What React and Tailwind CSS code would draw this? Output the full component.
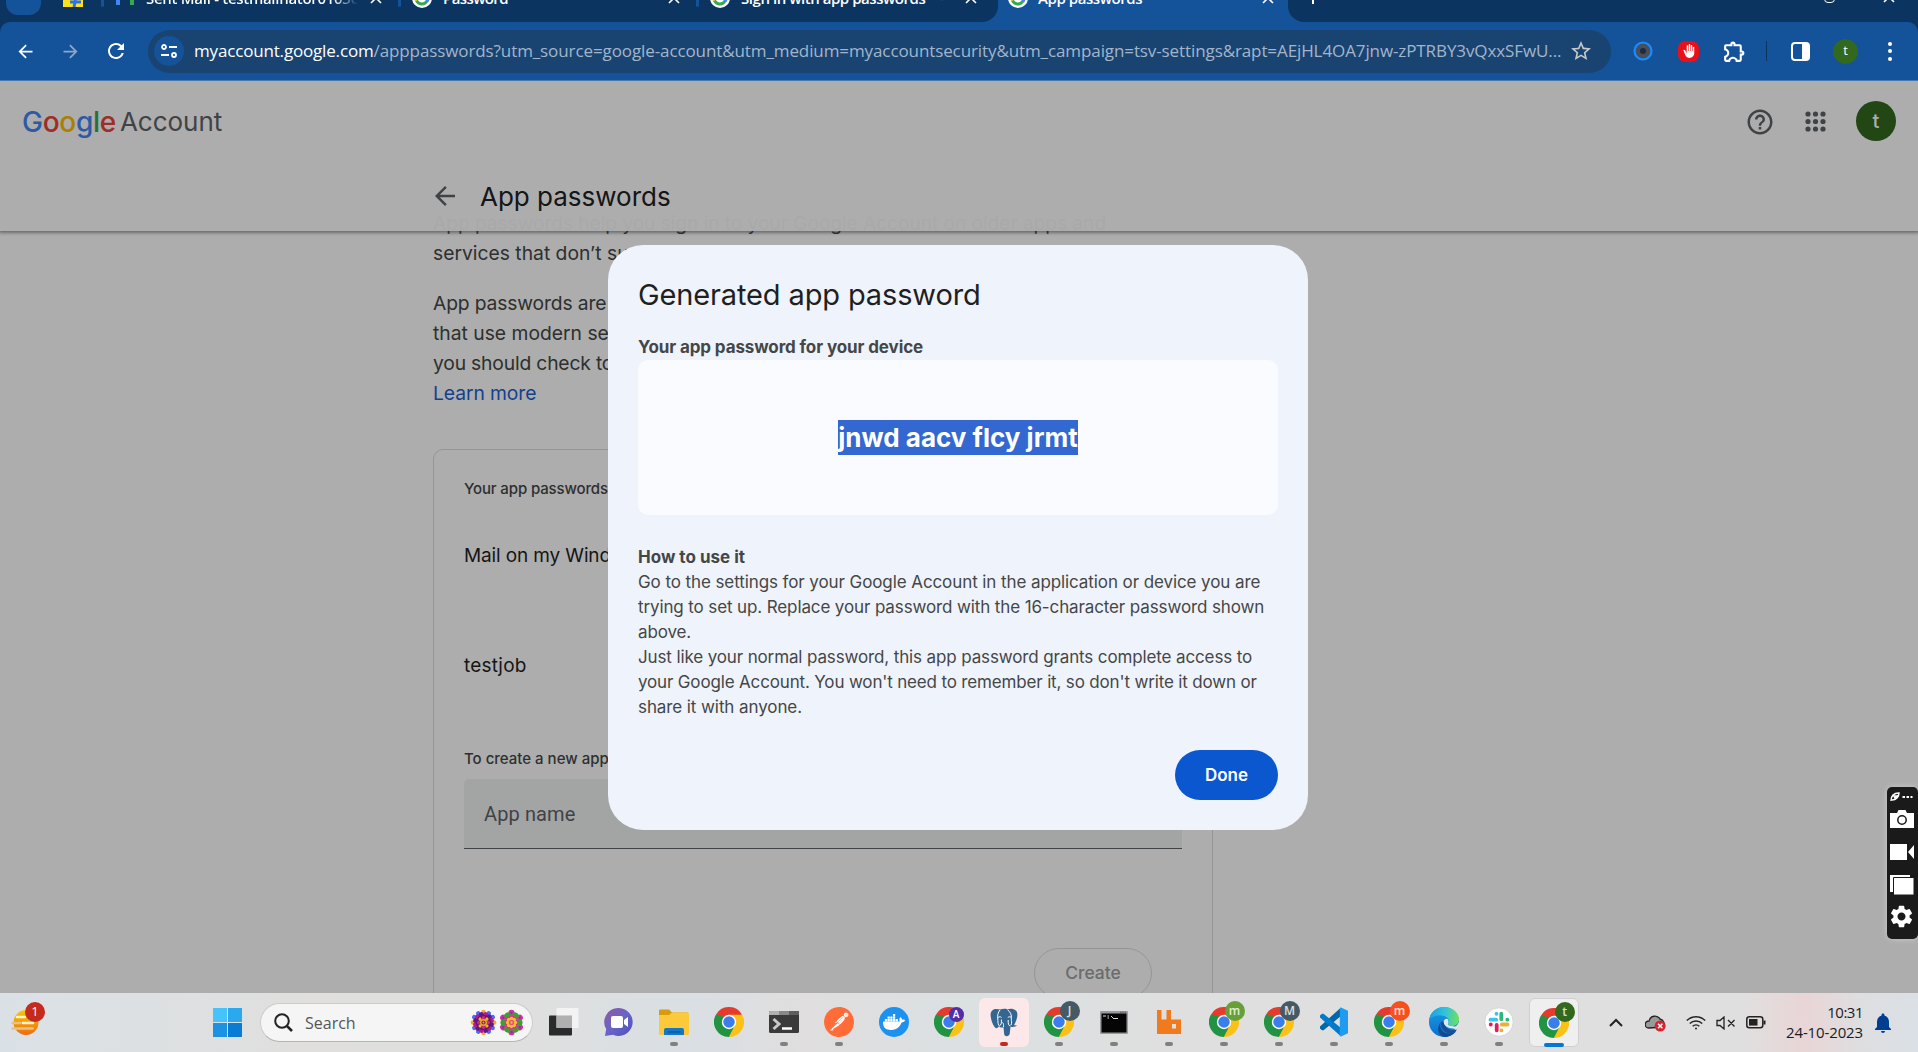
import React from "react";
import { SiDocker, SiPostman } from "react-icons/si";
import { MdHelpOutline, MdArrowBack, MdArrowForward, MdRefresh, MdStarBorder, MdOutlineExtension, MdSettings, MdNotifications, MdBackHand } from "react-icons/md";

const T = ({ c = "", children }) => (
  <span className={"inline-block whitespace-pre " + c}>{children}</span>
);

const GIcon = () => (
  <svg viewBox="0 0 20 20" className="h-5 w-5 shrink-0">
    <circle cx="10" cy="10" r="10" fill="#fff" />
    <path d="M4.4 12.5a6 6 0 0 0 10.6.6" stroke="#34a853" strokeWidth="3" fill="none" />
    <path d="M15 13.5A6 6 0 0 0 16 9.5h-5.5" stroke="#4285f4" strokeWidth="3" fill="none" />
    <path d="M4.4 12.5a6 6 0 0 1 0-5" stroke="#fbbc04" strokeWidth="3" fill="none" />
    <path d="M4.4 7.5a6 6 0 0 1 10-1.5" stroke="#ea4335" strokeWidth="3" fill="none" />
  </svg>
);

const X = () => (
  <svg viewBox="0 0 12 12" className="h-3 w-3 shrink-0"><path d="M1 1l10 10M11 1L1 11" stroke="#fff" strokeWidth="1.6" /></svg>
);

const Tab = ({ icon, label, wrap, pad, track, end, close = "mr-4" }) => (
  <div className={"-mt-[14px] flex h-6 items-center " + wrap}>
    <span className={"flex shrink-0 justify-center " + pad}>{icon}</span>
    <T c={"text-[15px] font-semibold text-white " + track}>{label}</T>
    {end}
    <span className={"ml-auto flex " + close}><X /></span>
  </div>
);

const Chrome = () => (
  <svg viewBox="0 0 48 48" className="h-[30px] w-[30px]">
    <path d="M24 24L3.200 12A24 24 0 0 1 44.800 12z" fill="#e33b2e" />
    <path d="M24 24L44.800 12A24 24 0 0 1 24 48z" fill="#fbc116" />
    <path d="M24 24L24 48A24 24 0 0 1 3.200 12z" fill="#229342" />
    <path d="M24 12.500h21L33.500 29.500z" fill="#fbc116" />
    <path d="M14.500 29.500L3.500 11.500l12.500 4z" fill="#229342" />
    <path d="M33.500 29.500L24 48l-4-13z" fill="#229342" />
    <path d="M33.500 29.500L24 48l11-5 4-16z" fill="#fbc116" />
    <circle cx="24" cy="24" r="11.500" fill="#fff" />
    <circle cx="24" cy="24" r="9.200" fill="#3b7ded" />
  </svg>
);

const ChromeBadge = ({ bg, children, small }) => (
  <div className="relative">
    <Chrome />
    {small ? (
      <span className={"absolute left-[15px] top-0 flex h-[15px] w-[15px] items-center justify-center rounded-full text-[10px] font-semibold text-white " + bg}>{children}</span>
    ) : (
      <span className={"absolute -top-[6px] left-[16px] flex h-5 w-5 items-center justify-center rounded-full pb-px text-[12px] font-semibold text-white/80 " + bg}>{children}</span>
    )}
  </div>
);

const Mandala = () => (
  <svg viewBox="-14 -14 28 28" className="h-[27px] w-[27px]">
    {Array.from({ length: 12 }, (_, i) => (
      <circle key={i} cy="-11" r="2.300" fill={i % 3 ? "#5468f0" : "#f0a830"} transform={"rotate(" + i * 30 + ")"} />
    ))}
    {Array.from({ length: 12 }, (_, i) => (
      <circle key={i} cy="-8.500" r="2.500" fill={i % 2 ? "#5a1a90" : "#b01a8a"} transform={"rotate(" + (i * 30 + 15) + ")"} />
    ))}
    <circle r="8" fill="#6a1470" />
    {Array.from({ length: 8 }, (_, i) => (
      <circle key={i} cy="-5" r="1.700" fill={i % 2 ? "#f0b020" : "#d8287a"} transform={"rotate(" + i * 45 + ")"} />
    ))}
    <circle r="3.600" fill="#f0b020" />
    <circle r="2.200" fill="#7a1a70" />
    <circle r="1" fill="#f0b020" />
  </svg>
);

const Blossom = () => (
  <svg viewBox="-14 -14 28 28" className="h-[27px] w-[27px]">
    {Array.from({ length: 6 }, (_, i) => (
      <g key={i} transform={"rotate(" + i * 60 + ")"}>
        <circle cy="-10" r="3.200" fill="#d8309a" />
        <circle cy="-10" r="1.200" fill="#6a3ad0" />
      </g>
    ))}
    {Array.from({ length: 6 }, (_, i) => (
      <circle key={i} cy="-8" r="3.500" fill="#3f9f30" transform={"rotate(" + (i * 60 + 30) + ")"} />
    ))}
    <circle r="7" fill="#e0308a" />
    {Array.from({ length: 8 }, (_, i) => (
      <circle key={i} cy="-4" r="1.900" fill="#f5c030" transform={"rotate(" + i * 45 + ")"} />
    ))}
    <circle r="2.800" fill="#e8508a" />
    <circle r="1.200" fill="#f5c030" />
  </svg>
);

const Elephant = () => (
  <svg viewBox="0 0 28 29" className="h-[29px] w-7">
    <path d="M10 1.500C5 0 .5 1.500.6 7c.1 4 1.800 9 4 12 1.300 1.700 2.800 1.500 4-.2 1.500 1 3 .8 4.900.5l.7 7c.3 2.500 5 2.700 5.500-.5l.8-7c2.500.5 5.500 0 6.500-1.500-1.500.2-2.600 0-2.800-.5 2-3.200 3.500-8 3.100-11.300C26.800 1.200 21.500 0 17.500 1.300 15 .6 12.500.7 10 1.500z" fill="#336791" />
    <g fill="none" stroke="#fff" strokeWidth="1">
      <path d="M10 2C7.800 4.500 7.300 8 7.800 11c.3 2-.2 4 1 6.500M17.500 1.800c3 2.200 4.300 5 3.800 9-.2 2.500 1 3.500-.4 6.500M8.800 18.500c2.500-1.500 3-3.500 2.500-7M13.500 19c.1-2 .2-3.500-1-4.500M20.300 18c-1.800-.4-2.300-2.300-2.100-6" />
      <path d="M8 9.500c1.300-1 2.500-1 3.500 0M17.800 9.500c1-.8 2-.9 3.200-.3" />
    </g>
  </svg>
);

const Slot = ({ dot, children, tile }) => (
  <div className="flex h-[59px] w-[55px] flex-col items-center">
    <div className={"mt-[5px] flex h-[49px] w-[50px] flex-col items-center rounded-md " + (tile || "")}>
      <div className="mt-[9px] flex h-[30px] w-[30px] items-center justify-center">{children}</div>
      {dot && <div className={"mt-[5px] h-1 shrink-0 rounded-full " + dot} />}
    </div>
  </div>
);
const GREY = "w-2 bg-[#808080]";

const VSCode = () => (
  <svg viewBox="0 0 30 30" className="h-[30px] w-[30px]">
    <path d="M22 0.500L1 19.500v2l2 1.800h1.500L22 9z" fill="#0065a9" />
    <path d="M22 29.500L1 10.500v-2L3 6.700h1.500L22 21z" fill="#007acc" />
    <path d="M22 0.500l7 3.200v22.600l-7 3.200-1.200-.8V1.300z" fill="#1f9cf0" />
  </svg>
);

const Edge = () => (
  <svg viewBox="0 0 30 30" className="h-[30px] w-[30px]">
    <defs>
      <linearGradient id="e1" x1="0" y1=".4" x2="1" y2=".5"><stop offset="0" stopColor="#1b9de2" /><stop offset=".5" stopColor="#2fc3df" /><stop offset="1" stopColor="#6fe05a" /></linearGradient>
      <linearGradient id="e2" x1="0" y1="0" x2="0" y2="1"><stop offset="0" stopColor="#1b9de2" /><stop offset="1" stopColor="#0b6fd0" /></linearGradient>
      <clipPath id="ec"><path d="M0 0h30v15c-2 4-4 5-6 6l4 3-5 6H0z" /></clipPath>
    </defs>
    <circle cx="15" cy="15" r="15" fill="url(#e2)" clipPath="url(#ec)" />
    <path d="M0 13.500C1 5 7.500 0 15 0c9 0 15 6 15 12.500 0 4-3 6.500-7 6.500-3 0-4.500-1.200-4-2.500 1.200-1.800 1-3.500 0-5C16 7.500 5 6 0 13.500z" fill="url(#e1)" />
    <path d="M12 15c-2.500 5 1 11.500 8 11.500 3 0 5.500-1 7.500-3C25 27.500 20.500 30 16 30 9 29.500 7 20 12 15z" fill="#114a8b" />
    <path d="M12.500 14.500c-1.500 4 .5 9.500 6 11.500 4 .8 7.500-.5 9.500-3.500-3 1.200-7 1-9.500-1-2.500-1.800-3-4-2-6.500z" fill="#14509a" />
    <path d="M18.700 12c-2-1-4 .5-4 3 0 3.500 4 6.500 9 6.500 2.500 0 4.500-1 6-2.500-2 .5-3.500.6-5.500.3-4-.4-6-1.300-5.200-2.800.8-1.300.6-3-.3-4.500z" fill="#dfe9ee" />
  </svg>
);

const Slack = () => (
  <svg viewBox="0 0 30 30" className="h-[30px] w-[30px]">
    <circle cx="15" cy="15" r="14.200" fill="#fff" stroke="#cfcfcf" strokeWidth=".8" />
    <g strokeWidth="3.800" strokeLinecap="round">
      <path d="M6.500 12.700h5.700M12.500 6.700v.1" stroke="#36c5f0" />
      <path d="M17.300 6.700v5.500M23.300 12.700h.1" stroke="#2eb67d" />
      <path d="M17.800 17.500h5.700M17.500 23.300v.1" stroke="#ecb22e" />
      <path d="M12.700 17.800v5.500M6.700 17.500h.1" stroke="#e01e5a" />
    </g>
  </svg>
);

export default function App() {
  return (
    <div className="flex h-[1052px] w-[1918px] flex-col overflow-hidden bg-[#0c3460] font-['Open_Sans','Noto_Sans',sans-serif]">
      {/* Tab strip */}
      <div className="flex h-[22px] shrink-0 overflow-hidden bg-[#14529a]">
        <div className="flex w-[998px] shrink-0 items-start overflow-hidden rounded-br-2xl bg-[#0c3460]">
          <div className="-mt-5 ml-[6px] h-[35px] w-[35px] shrink-0 rounded-xl bg-[#14529a]" />
          <div className="ml-[22px] h-[7px] w-5 shrink-0 bg-[#ffe11b]">
            <svg viewBox="0 0 20 7" className="h-[7px] w-5"><path d="M7 2h11M12.500 0L11 7" stroke="#2874f0" strokeWidth="3" /></svg>
          </div>
          <div className="ml-[18px] h-[7px] w-[3px] shrink-0 rounded-b bg-[#14529a]" />
          <Tab wrap="w-[294px] shrink-0" pad="w-[42px]" track="tracking-[-0.29px] bg-gradient-to-r from-white from-88% to-transparent bg-clip-text !text-transparent" label="Sent Mail - testmailnator0103c"
            icon={<svg viewBox="0 0 18 14" className="h-[14px] w-[18px]"><path d="M0 0h4v14H0z" fill="#4285f4" /><path d="M14 0h4v14h-4z" fill="#34a853" /><path d="M2 2l7 5 7-5" stroke="#ea4335" strokeWidth="3" fill="none" /></svg>} />
          <div className="h-[7px] w-[3px] shrink-0 rounded-b bg-[#14529a]" />
          <Tab wrap="w-[295px] shrink-0" pad="w-[42px]" track="tracking-[-0.59px]" label="Password" icon={<GIcon />} />
          <div className="h-[7px] w-[3px] shrink-0 rounded-b bg-[#14529a]" />
          <Tab wrap="w-[285px] shrink-0" pad="w-[42px]" track="tracking-[-0.45px]" label="Sign in with app passwords" icon={<GIcon />} close="mr-[7px]"
            end={<span className="ml-[14px] text-[15px] text-[#5d7da3]">-</span>} />
        </div>
        <Tab wrap="w-[290px] shrink-0" pad="w-[40px]" track="tracking-[-0.43px]" label="App passwords" icon={<GIcon />} close="mr-[14px]" />
        <div className="flex h-[22px] flex-1 items-start overflow-hidden rounded-bl-2xl bg-[#0c3460]">
          <div className="ml-6 h-1 w-[2px] bg-white" />
          <div className="-mt-2 ml-[510px] h-[11px] w-[11px] rounded-sm border-[1.5px] border-white" />
          <span className="-mt-[9px] ml-[48px]"><X /></span>
        </div>
      </div>

      {/* Toolbar */}
      <div className="flex h-[59px] shrink-0 items-center rounded-t-[10px] border-b border-[#4a78b3] bg-[#14529a]">
        <div className="flex w-[148px] shrink-0 items-center pl-[15px] text-[21px] text-white">
          <MdArrowBack /><MdArrowForward className="ml-[24px] opacity-50" /><MdRefresh className="ml-[23px] text-[24px]" />
        </div>
        <div className="flex h-[43px] w-[1463px] shrink-0 items-center rounded-full bg-[#194472] pl-[6px] pr-[18px]">
          <div className="flex h-[30px] w-[30px] shrink-0 items-center justify-center rounded-full bg-[#14529a]">
            <svg viewBox="0 0 16 14" className="h-[14px] w-4" fill="none" stroke="#fff" strokeWidth="1.800"><circle cx="3" cy="3" r="2" /><path d="M8 3h8M0 11h8" /><circle cx="13" cy="11" r="2" /></svg>
          </div>
          <div className="ml-[10px] flex whitespace-nowrap text-[17px] text-[#a3b5ca]">
            <T c="tracking-[-0.17px] text-white">myaccount.google.com</T>
            <T c="tracking-[-0.1px]">/apppasswords?utm_source=google-account&amp;utm_medium=myaccountsecurity&amp;utm_campaign=tsv-settings&amp;rapt=AEjHL4OA7jnw-zPTRBY3vQxxSFwU...</T>
          </div>
          <MdStarBorder className="ml-auto shrink-0 text-[24px] text-[#c7c9cb]" />
        </div>
        <div className="flex flex-1 items-center pl-[22px]">
          <svg viewBox="0 0 20 20" className="h-5 w-5"><circle cx="10" cy="10" r="8.500" fill="#46505c" stroke="#1a8cff" strokeWidth="2.200" /><circle cx="10" cy="10" r="3" fill="#222c38" /></svg>
          <div className="ml-[25px] flex h-[21px] w-[21px] items-center justify-center rounded-[7px] bg-[#e8101a] text-white"><MdBackHand className="text-[14px]" /></div>
          <MdOutlineExtension className="ml-[23px] text-[25px] text-white" />
          <div className="ml-[19px] h-5 w-px bg-[#0c3460]" />
          <div className="ml-[24px] h-[19px] w-[19px] rounded-sm border-2 border-r-8 border-white" />
          <div className="ml-[23px] flex h-[25px] w-[25px] items-center justify-center rounded-full bg-[#33691e] pb-px text-[13px] text-white">t</div>
          <div className="ml-[30px] flex flex-col gap-[3.500px]"><i className="h-1 w-1 rounded-full bg-white" /><i className="h-1 w-1 rounded-full bg-white" /><i className="h-1 w-1 rounded-full bg-white" /></div>
        </div>
      </div>

      {/* Page */}
      <div className="relative h-[912px] shrink-0 overflow-hidden bg-white font-[Inter,Roboto,sans-serif]">
        <div className="ml-[433px] w-[780px] pt-[127px]">
          <p className="text-[19.300px] leading-[30px] text-[#444746]">
            <T c="tracking-[-0.11px]">App passwords help you sign in to your Google Account on older apps and</T><br />
            <T>services that don’t support modern security standards.</T>
          </p>
          <p className="mt-5 text-[19.300px] leading-[30px] text-[#444746]">
            <T c="tracking-[-0.15px]">App passwords are less secure than using up-to-date apps and services</T><br />
            <T>that use modern security standards. Before you create an app</T><br />
            <T c="tracking-[-0.18px]">you should check to see if your app needs this to sign in.</T><br />
            <T c="tracking-[-0.08px] text-[#1d5fd0]">Learn more</T>
          </p>
          <div className="mt-[41px] h-[640px] rounded-[10px] border border-[#dadce0] px-[30px] pt-[26px]">
            <div className="h-[26px] text-[15px] font-medium leading-[26px] text-[#444746]"><T c="tracking-[-0.13px]">Your app passwords</T></div>
            <div className="mt-[39px] h-[30px] text-[19px] leading-[30px] text-[#1f1f1f]"><T c="tracking-[-0.13px]">Mail on my Windows Computer</T></div>
            <div className="mt-[80px] h-[30px] text-[19px] leading-[30px] text-[#1f1f1f]"><T c="tracking-[0.2px]">testjob</T></div>
            <div className="mt-[65px] h-[26px] text-[15px] font-medium leading-[26px] text-[#444746]"><T>To create a new app specific password, type a name for it below…</T></div>
            <div className="mt-[7px] flex h-[70px] items-center rounded-t-[5px] border-b border-[#5f6368] bg-[#f1f3f4] pl-5 font-[Roboto] text-[20px] text-[#5f6368]"><T c="tracking-[0.12px]">App name</T></div>
            <div className="mr-[30px] mt-[99px] flex justify-end">
              <div className="flex h-[50px] w-[118px] items-center justify-center rounded-full border border-[#dcdddd] text-[17.500px] font-medium text-[#9e9f9f]"><T>Create</T></div>
            </div>
          </div>
        </div>
        {/* App bar above scrolled content */}
        <div className="absolute inset-x-0 top-0 h-[150px] bg-white/97 shadow-[0_1px_3px_1px_rgba(60,64,67,0.5)]">
          <div className="flex h-[80px] items-center">
            <div className="ml-[22px] mt-px text-[28px] font-medium"><T c="tracking-[-0.3px]"><i className="not-italic text-[#4285f4]">G</i><i className="not-italic text-[#ea4335]">o</i><i className="not-italic text-[#fbbc04]">o</i><i className="not-italic text-[#4285f4]">g</i><i className="not-italic text-[#34a853]">l</i><i className="not-italic text-[#ea4335]">e</i></T></div>
            <div className="ml-1 mt-px text-[26px] text-[#5f6368]"><T>Account</T></div>
            <MdHelpOutline className="ml-auto mt-px text-[30px] text-[#5f6368]" />
            <svg viewBox="0 0 21 21" className="ml-[30px] h-[21px] w-[21px]" fill="#5f6368">{[3, 10.500, 18].map((x) => [3, 10.500, 18].map((y) => <circle key={x + "-" + y} cx={x} cy={y} r="2.600" />))}</svg>
            <div className="ml-[30px] mr-[22px] flex h-10 w-10 items-center justify-center rounded-full bg-[#33691e] pb-px text-[20px] font-medium text-white">t</div>
          </div>
          <div className="flex h-[70px] items-center">
            <MdArrowBack className="ml-[430px] text-[30px] text-[#5f6368]" />
            <h1 className="ml-[20px] mt-px text-[26px] text-[#202124]"><T>App passwords</T></h1>
          </div>
        </div>
        {/* Dialog */}
        <div className="absolute inset-0 flex items-start justify-center bg-black/32 pr-[2px] pt-[164px]">
          <div className="h-[585px] w-[700px] rounded-[35px] bg-[#eff3fc] px-[30px] pt-[30px] text-[17px] leading-[25px] text-[#444746]">
            <h2 className="h-10 text-[29px] leading-10 text-[#1f1f1f]"><T c="tracking-[-0.13px]">Generated app password</T></h2>
            <div className="mt-[20px] h-[25px] font-bold"><T c="tracking-[-0.11px]">Your app password for your device</T></div>
            <div className="flex h-[155px] items-center justify-center rounded-[10px] bg-[#f9fbff]">
              <span className="flex h-[35px] items-center bg-[#3367d1] text-[26px] font-bold text-white"><T>jnwd aacv flcy jrmt</T></span>
            </div>
            <div className="mt-[30px] h-[25px] font-bold"><T>How to use it</T></div>
            <T c="tracking-[-0.09px]">Go to the settings for your Google Account in the application or device you are</T><br />
            <T c="tracking-[-0.12px]">trying to set up. Replace your password with the 16-character password shown</T><br />
            <T c="tracking-[-0.12px]">above.</T><br />
            <T c="tracking-[-0.13px]">Just like your normal password, this app password grants complete access to</T><br />
            <T c="tracking-[-0.16px]">your Google Account. You won't need to remember it, so don't write it down or</T><br />
            <T c="tracking-[-0.09px]">share it with anyone.</T>
            <div className="mt-[30px] flex justify-end">
              <button className="h-[50px] w-[103px] rounded-full bg-[#0b57d0] font-semibold text-white"><T>Done</T></button>
            </div>
          </div>
        </div>
        {/* Capture widget */}
        <div className="absolute right-0 top-[706px] flex h-[152px] w-[31px] flex-col items-center rounded-[5px] bg-[#1a1a1a] pr-[2px] pt-[5px] text-white shadow-[0_0_6px_rgba(255,255,255,0.35)]">
          <svg viewBox="0 0 24 10" className="h-[10px] w-6 shrink-0" fill="none" stroke="#fff"><path d="M1 9C1 4 4 1 9 1c0 4-3 7-7 7M3 4h5M4 6l5-3" strokeWidth="1.500" /><path d="M12.500 5h10" strokeWidth="2.200" strokeDasharray="2.500 1.500" /></svg>
          <svg viewBox="0 0 24 18" className="mt-[8px] h-[18px] w-6 shrink-0"><path d="M0 3h7l1.500-3h7L17 3h7v15H0z" fill="#fff" /><circle cx="12" cy="10" r="4.200" fill="#fff" stroke="#1a1a1a" strokeWidth="1.500" /></svg>
          <svg viewBox="0 0 24 16" className="mt-[16px] h-4 w-6 shrink-0" fill="#fff"><path d="M0 0h17v16H0zM18 8l6-7v14z" /></svg>
          <svg viewBox="0 0 24 20" className="mt-[15px] h-5 w-6 shrink-0"><path d="M0 0h20v17H0z" fill="#fff" /><path d="M3.500 2.500H24V20H3.500z" fill="#fff" stroke="#1a1a1a" strokeWidth="1" /></svg>
          <MdSettings className="mt-[8px] shrink-0 text-[27px]" />
        </div>
      </div>

      {/* Taskbar */}
      <div className="flex h-[59px] shrink-0 items-center bg-[linear-gradient(90deg,#dae1e6_0%,#e0dfde_16%,#dfdfdf_28%,#d9dfe4_36%,#e0dede_42%,#dbe0e2_50%,#dfdfdf_60%,#e0dfdf_91%,#e9d5d6_94%,#dedee0_97%,#dae0e6_100%)]">
        <div className="relative ml-[11px] h-[30px] w-7">
          <svg viewBox="0 0 28 30" className="h-[30px] w-7"><defs><linearGradient id="w" x1="0" y1="0" x2="0" y2="1"><stop offset="0" stopColor="#f8c800" /><stop offset="1" stopColor="#f06a10" /></linearGradient></defs><circle cx="15" cy="14.500" r="12.500" fill="url(#w)" /><g strokeLinecap="round" strokeWidth="2.600"><path d="M6 9h8M12 15h10" stroke="#fff3d0" /><path d="M1.500 15h8M1.500 20.500h20" stroke="#e0c48a" /></g></svg>
          <span className="absolute -top-[6px] left-[14px] flex h-5 w-5 items-center justify-center rounded-full bg-[#c42b1c] text-[13px] text-white">1</span>
        </div>
        <div className="ml-[174px] grid h-[29px] w-[29px] grid-cols-2 gap-px">
          <i className="bg-[#45c3fa]" /><i className="bg-[#2ba9ee]" /><i className="bg-[#1b93e2]" /><i className="bg-[#0a7cd6]" />
        </div>
        <div className="ml-[18px] flex h-[39px] w-[273px] items-center rounded-full border border-[#cccccc] border-b-[#b5b5b5] bg-[#f5f5f5] pl-[13px]">
          <svg viewBox="0 0 19 19" className="h-[19px] w-[19px]" fill="none" stroke="#222" strokeWidth="2"><circle cx="8" cy="8" r="6.800" /><path d="M12.800 12.800L18 18" strokeWidth="2.600" /></svg>
          <span className="ml-3 text-[16px] text-[#555]"><T>Search</T></span>
          <div className="ml-auto mr-[7px] flex gap-px"><Mandala /><Blossom /></div>
        </div>
        <div className="ml-[3px] flex">
          <Slot><svg viewBox="0 0 30 30" className="h-[30px] w-[30px]"><rect x="0" y="8.500" width="23" height="20" rx="1" fill="#2b2b2b" /><rect x="7.500" y="1" width="22" height="20" rx="1" fill="#f4f4f4" fillOpacity=".93" /><rect x="7.500" y="8.500" width="15.500" height="12.500" fill="#b0b0b0" /></svg></Slot>
          <Slot><svg viewBox="0 0 30 30" className="h-[30px] w-[30px]"><defs><linearGradient id="tm" x1="0" y1="0" x2="1" y2="1"><stop offset="0" stopColor="#8b5d9e" /><stop offset=".5" stopColor="#6a63c8" /><stop offset="1" stopColor="#4c50bd" /></linearGradient></defs><path d="M15 1a14 14 0 1 1-6 26.800L1 29l1.200-7A14 14 0 0 1 15 1z" fill="url(#tm)" /><rect x="7" y="9" width="12" height="12" rx="2" fill="#fff" /><path d="M20 13l4-3v10l-4-3z" fill="#fff" /></svg></Slot>
          <Slot dot={GREY}><svg viewBox="0 0 30 30" className="h-[30px] w-[30px]"><path d="M0 3.500a1 1 0 0 1 1-1h9l3 3h16V10H0z" fill="#d99a0b" /><path d="M0 8h10l3-2.500h16a1 1 0 0 1 1 1V27a1 1 0 0 1-1 1H1a1 1 0 0 1-1-1z" fill="#fcc93a" /><path d="M5 28v-5a2 2 0 0 1 2-2h16a2 2 0 0 1 2 2v5z" fill="#1377c8" /><path d="M8.500 25h13" stroke="#0a4a8a" strokeWidth="1" /></svg></Slot>
          <Slot><Chrome /></Slot>
          <Slot dot={GREY}><svg viewBox="0 0 30 22" className="h-[22px] w-[30px]"><rect width="30" height="22" rx="1.500" fill="#3a3a3a" /><path d="M0 1.500A1.500 1.500 0 0 1 1.500 0H10v4H0z" fill="#b0b0b0" /><path d="M10 0h10v4H10z" fill="#888" /><path d="M20 0h10v4H20z" fill="#5f5f5f" /><path d="M4.500 8l5.500 5-5.500 5" stroke="#c8c8c8" strokeWidth="3" fill="none" /><path d="M13 17.500h10" stroke="#fff" strokeWidth="2.500" /></svg></Slot>
          <Slot dot={GREY}><div className="h-[30px] w-[30px] rounded-full bg-white"><SiPostman className="text-[30px] text-[#ff6c37]" /></div></Slot>
          <Slot><div className="flex h-[30px] w-[30px] items-center justify-center rounded-full bg-[#1d91f0]"><SiDocker className="text-[22px] text-white" /></div></Slot>
          <Slot><ChromeBadge small bg="bg-[#512da8]">A</ChromeBadge></Slot>
          <Slot dot="w-2 bg-[#c42b1c]" tile="bg-[#fce7e9]"><Elephant /></Slot>
          <Slot dot={GREY}><ChromeBadge bg="bg-[#455a64]">J</ChromeBadge></Slot>
          <Slot dot={GREY}><svg viewBox="0 0 28 23" className="h-[23px] w-7"><rect width="28" height="23" rx="1" fill="#9a9aa2" /><rect x="1.500" y="2.500" width="25" height="19" fill="#050505" /><path d="M3 5h3M7.500 5h1.500M7.500 7h1.500M11 5l2 2M13 7.500h5" stroke="#ddd" strokeWidth="1" /><path d="M20 1.200h6" stroke="#555" strokeDasharray="1.500 .8" /></svg></Slot>
          <Slot dot={GREY}><svg viewBox="0 0 24 24" className="h-6 w-6"><path fillRule="evenodd" d="M0 0h4.500v9.500h5V0H14v9.500h10V24H0zM15 14v4.500h4V14z" fill="#f07b1f" /></svg></Slot>
          <Slot dot={GREY}><ChromeBadge bg="bg-[#689f38]">m</ChromeBadge></Slot>
          <Slot dot={GREY}><ChromeBadge bg="bg-[#455a64]">M</ChromeBadge></Slot>
          <Slot dot={GREY}><VSCode /></Slot>
          <Slot dot={GREY}><ChromeBadge bg="bg-[#f4511e]">m</ChromeBadge></Slot>
          <Slot dot={GREY}><Edge /></Slot>
          <Slot dot={GREY}><Slack /></Slot>
          <Slot dot="w-5 bg-[#0078d4]" tile="border border-[#d0d0d0] bg-[#efefef]"><ChromeBadge bg="bg-[#33691e]">t</ChromeBadge></Slot>
        </div>
        <div className="ml-[28px] flex items-center">
          <svg viewBox="0 0 14 9" className="h-[9px] w-[14px]" fill="none" stroke="#222" strokeWidth="2"><path d="M1 8l6-6 6 6" /></svg>
          <svg viewBox="0 0 21 18" className="ml-[22px] h-[18px] w-[21px]"><path d="M3.500 14A3.500 3.500 0 0 1 4 7a6 6 0 0 1 11-2 5 5 0 0 1 3 8z" fill="#9a9a9a" stroke="#222" strokeWidth="1.300" /><circle cx="15.200" cy="12" r="5.500" fill="#d6232f" /><path d="M13 9.800l4.400 4.400M17.400 9.800L13 14.200" stroke="#fff" strokeWidth="1.500" /></svg>
          <svg viewBox="0 0 20 15" className="ml-[20px] h-[15px] w-5" fill="none" stroke="#222" strokeWidth="1.500"><path d="M.8 5.500a13 13 0 0 1 18.400 0M3.800 8.500a8.800 8.800 0 0 1 12.400 0M6.700 11.300a4.700 4.700 0 0 1 6.600 0" /><circle cx="10" cy="13.400" r="1" fill="#222" stroke="none" /></svg>
          <svg viewBox="0 0 20 14" className="ml-[10px] h-[14px] w-5" fill="none" stroke="#222" strokeWidth="1.300"><path d="M1 4.500h3L8 1v12L4 9.500H1zM12 4l6.500 6.500M18.500 4L12 10.500" /></svg>
          <svg viewBox="0 0 20 13" className="ml-[10px] h-[13px] w-5"><rect x=".8" y=".8" width="16" height="11" rx="2.500" fill="none" stroke="#222" strokeWidth="1.500" /><rect x="3" y="3" width="8.500" height="6.600" fill="#222" /><path d="M18.500 4.500v4" stroke="#222" strokeWidth="2" /></svg>
        </div>
        <div className="-mt-[2px] ml-auto flex flex-col items-end text-[15px] leading-5 text-[#1b1b1b]">
          <T c="tracking-[-0.5px]">10:31</T><T c="tracking-[-0.13px]">24-10-2023</T>
        </div>
        <MdNotifications className="ml-[8px] mr-[23px] text-[24px] text-[#003e92]" />
      </div>
    </div>
  );
}
